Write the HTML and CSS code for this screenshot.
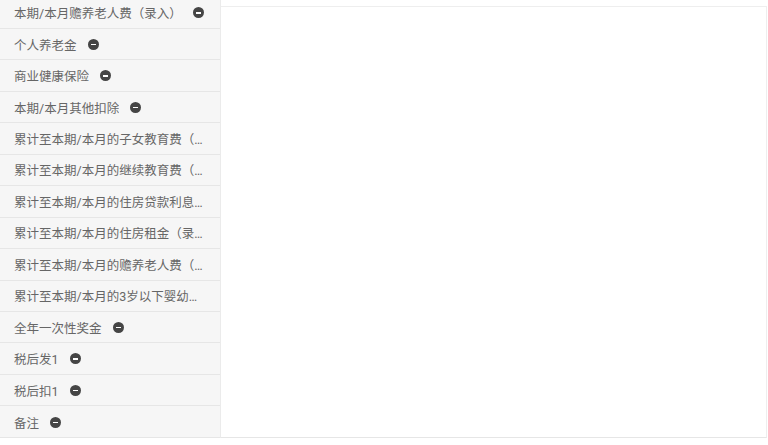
FILE: index.html
```html
<!DOCTYPE html>
<html lang="zh-CN">
<head>
    <meta charset="UTF-8">
    <meta name="viewport" content="width=device-width, initial-scale=1.0">
    <title>工资项设置</title>
    <link rel="stylesheet" href="styles.css">
</head>
<body>
    <div id="layout">
        <div id="side-list">
            <ul class="item-list">
                <li class="item"><span class="item-name">本期/本月赡养老人费（录入）</span><span class="remove-btn"></span></li>
                <li class="item"><span class="item-name">个人养老金</span><span class="remove-btn"></span></li>
                <li class="item"><span class="item-name">商业健康保险</span><span class="remove-btn"></span></li>
                <li class="item"><span class="item-name">本期/本月其他扣除</span><span class="remove-btn"></span></li>
                <li class="item"><span class="item-name">累计至本期/本月的子女教育费（录入）</span></li>
                <li class="item"><span class="item-name">累计至本期/本月的继续教育费（录入）</span></li>
                <li class="item"><span class="item-name">累计至本期/本月的住房贷款利息（录入）</span></li>
                <li class="item"><span class="item-name">累计至本期/本月的住房租金（录入）</span></li>
                <li class="item"><span class="item-name">累计至本期/本月的赡养老人费（录入）</span></li>
                <li class="item"><span class="item-name">累计至本期/本月的3岁以下婴幼儿照护费（录入）</span></li>
                <li class="item"><span class="item-name">全年一次性奖金</span><span class="remove-btn"></span></li>
                <li class="item"><span class="item-name">税后发1</span><span class="remove-btn"></span></li>
                <li class="item"><span class="item-name">税后扣1</span><span class="remove-btn"></span></li>
                <li class="item"><span class="item-name">备注</span><span class="remove-btn"></span></li>
            </ul>
        </div>
        <div id="detail-panel"></div>
    </div>
</body>
</html>
```

FILE: styles.css
```css
body {
    margin: 0;
    overflow: hidden;
    font-family: Roboto, "Noto Sans CJK SC", sans-serif;
    background-color: white;
}

#layout {
    display: flex;
    height: 438px;
}

/* Left list */
#side-list {
    width: 221px;
    background-color: #f6f6f6;
    border-right: 1px solid #ebebeb;
    border-bottom: 1px solid #e6e6e6;
    overflow: hidden;
    box-sizing: border-box;
}

.item-list {
    list-style: none;
    margin: -2.5px 0 0 0;
    padding: 0;
}

.item {
    display: flex;
    align-items: center;
    height: 31.46px;
    box-sizing: border-box;
    padding: 0 14px;
    border-bottom: 1px solid #e6e6e6;
    font-size: 12.5px;
    color: #666;
    white-space: nowrap;
}

.item:last-child {
    border-bottom: none;
}

.item-name {
    min-width: 0;
    overflow: hidden;
    text-overflow: ellipsis;
}

/* Minus badge next to removable items */
.remove-btn {
    position: relative;
    flex-shrink: 0;
    width: 11px;
    height: 11px;
    margin-left: 11px;
    border-radius: 50%;
    background-color: #454545;
    cursor: pointer;
}

.remove-btn::after {
    content: "";
    position: absolute;
    left: 3px;
    top: 5px;
    width: 5px;
    height: 1.5px;
    background-color: white;
}

/* Right panel */
#detail-panel {
    flex: 1;
    margin-top: 6px;
    margin-right: 1px;
    border-top: 1px solid #eeeeee;
    border-right: 1px solid #eeeeee;
    border-bottom: 1px solid #e6e6e6;
}
```
